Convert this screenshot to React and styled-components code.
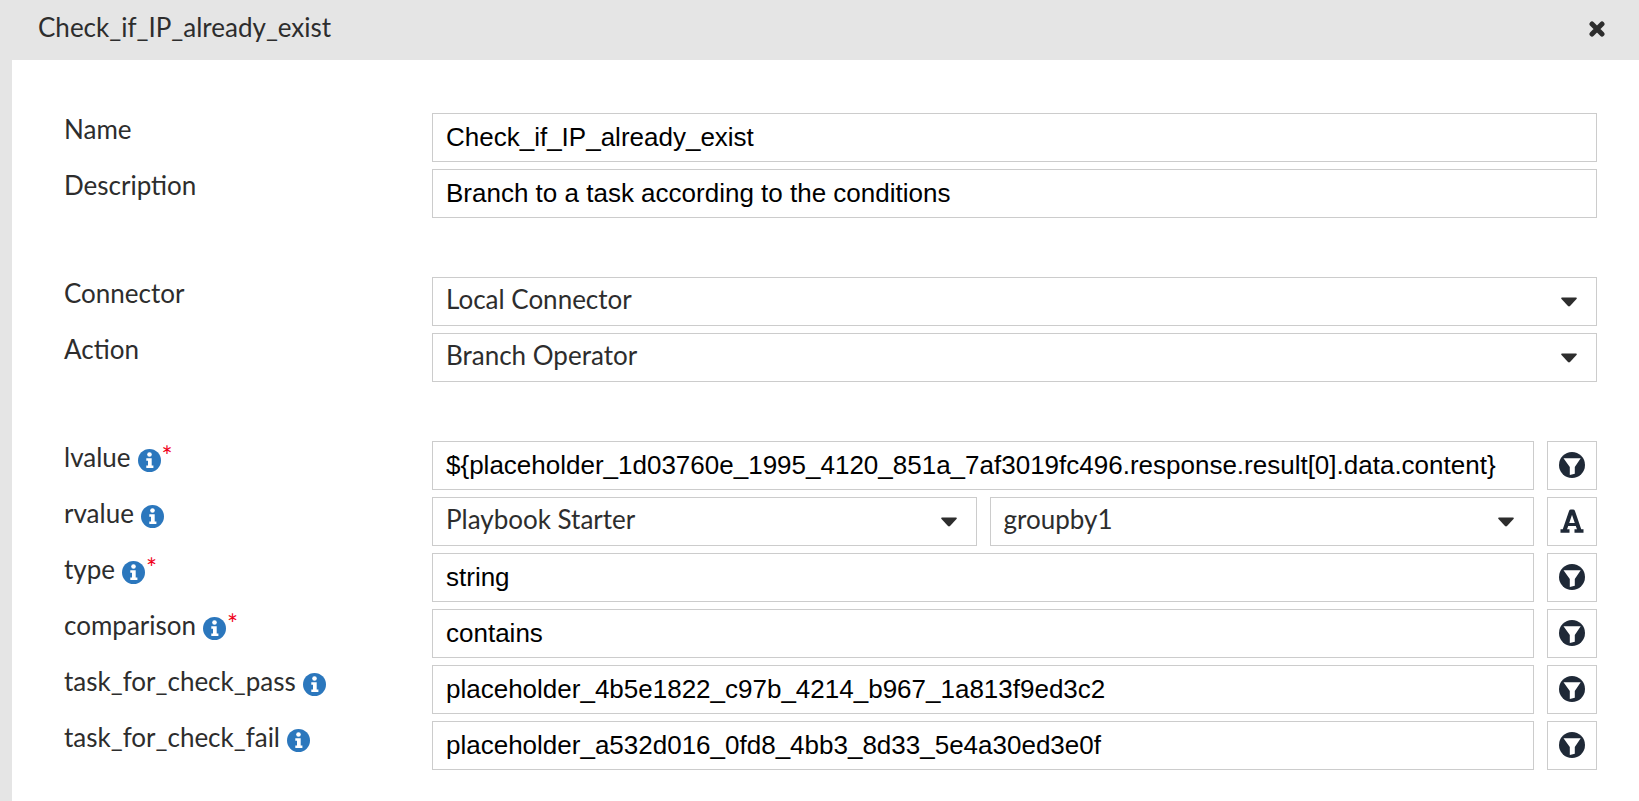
import React from 'react';
import styled, { createGlobalStyle } from 'styled-components';

const GlobalStyle = createGlobalStyle`
  *, *::before, *::after {
    box-sizing: border-box;
  }

  body {
    margin: 0;
    background-color: #fff;
    color: #2d2d2d;
    font-family: Lato, sans-serif;
    font-size: 26px;
  }
`;

const Dialog = styled.section`
  display: flex;
  flex-direction: column;
  min-height: 100vh;
`;

const Header = styled.header`
  display: flex;
  align-items: center;
  justify-content: space-between;
  height: 60px;
  padding: 0 32px 0 38px;
  background-color: #e5e5e5;
`;

const Title = styled.h1`
  margin: 0;
  padding-bottom: 6px;
  font-size: 26px;
  font-weight: 400;
  line-height: 32px;
`;

const CloseButton = styled.button`
  display: flex;
  padding: 2px 2px 4px;
  border: 0;
  background: none;
  color: #2d2d2d;
  cursor: pointer;
`;

const Form = styled.form`
  display: flex;
  flex: 1;
  flex-direction: column;
  gap: 59px;
  padding: 53px 42px 32px 52px;
  border-left: 12px solid #e5e5e5;
`;

const Group = styled.div`
  display: flex;
  flex-direction: column;
  gap: 7px;
`;

const Row = styled.div`
  display: grid;
  grid-template-columns: 368px minmax(0, 1fr);
`;

const LabelCell = styled.div`
  display: flex;
  align-items: flex-start;
  height: 49px;
`;

const Label = styled.label`
  line-height: 32px;
`;

const InfoSvg = styled.svg`
  width: 23px;
  height: 23px;
  margin: 8px 0 0 7px;
  color: #2b77bd;
`;

const Required = styled.span`
  margin-left: 1px;
  color: #f00018;
  font-size: 26px;
  line-height: 30px;
`;

const Controls = styled.div`
  display: flex;
  gap: 13px;
`;

const Input = styled.input`
  flex: 1;
  min-width: 0;
  height: 49px;
  padding: 0 13px;
  border: 1px solid #ccc;
  border-radius: 0;
  background-color: #fff;
  color: #000;
  font-family: 'Liberation Sans', Arial, sans-serif;
  font-size: 26px;
`;

const SelectWrap = styled.div`
  position: relative;
  flex: 1;
  min-width: 0;
`;

const StyledSelect = styled.select`
  width: 100%;
  height: 49px;
  padding: 0 48px 6px 13px;
  border: 1px solid #ccc;
  border-radius: 0;
  appearance: none;
  background-color: #fff;
  color: #2d2d2d;
  font-family: Lato, sans-serif;
  font-size: 26px;
`;

const Caret = styled.svg`
  position: absolute;
  top: 20px;
  right: 20px;
  width: 16px;
  height: 10px;
  fill: #2d2d2d;
  pointer-events: none;
`;

const IconButton = styled.button`
  display: flex;
  flex: none;
  align-items: center;
  justify-content: center;
  width: 50px;
  height: 49px;
  padding: 0 0 1px;
  border: 1px solid #ccc;
  background-color: #fff;
  color: #1f2937;
  cursor: pointer;
`;

const CloseIcon = () => (
  <svg width="16" height="16" viewBox="0 0 16 16" aria-hidden="true">
    <path
      d="M3 3l10 10M13 3L3 13"
      fill="none"
      stroke="currentColor"
      strokeWidth="5"
      strokeLinecap="round"
    />
  </svg>
);

const InfoIcon = () => (
  <InfoSvg viewBox="0 0 23 23" aria-hidden="true">
    <circle cx="11.5" cy="11.5" r="11.5" fill="currentColor" />
    <circle cx="11.5" cy="5.5" r="2.3" fill="#fff" />
    <path d="M8.300 9.200h5.400v7.300h1.700v2.500H8.300v-2.500H10v-4.800H8.300z" fill="#fff" />
  </InfoSvg>
);

const FilterIcon = () => (
  <svg width="26" height="26" viewBox="0 0 26 26" aria-hidden="true">
    <circle cx="13" cy="13" r="13" fill="currentColor" />
    <path d="M4.500 6.200h17.200l-5.900 8.800v6.800l-5 1.300V15z" fill="#fff" />
  </svg>
);

// slab style text icon, drawn with strokes
const TextIcon = () => (
  <svg width="24" height="24" viewBox="0 0 24 24" aria-hidden="true">
    <g fill="none" stroke="currentColor" strokeLinejoin="round">
      <path d="M4.500 21.500L11 2.500h2l6.500 19" strokeWidth="4" />
      <path d="M7 15.500h10" strokeWidth="3" />
      <path d="M.5 22h9M14.500 22h9" strokeWidth="3.500" />
    </g>
  </svg>
);

const Select = ({ value, ...props }) => (
  <SelectWrap>
    <StyledSelect defaultValue={value} {...props}>
      <option value={value}>{value}</option>
    </StyledSelect>
    <Caret viewBox="0 0 16 10" aria-hidden="true">
      <path d="M1 .5h14q1.400 .5 .5 1.500L9 9q-1 .8-2 0L.5 2Q-.4 1 1 .5z" />
    </Caret>
  </SelectWrap>
);

const Field = ({ id, label, info, required, children }) => (
  <Row>
    <LabelCell>
      <Label htmlFor={id}>{label}</Label>
      {info && <InfoIcon />}
      {required && <Required>*</Required>}
    </LabelCell>
    <Controls>{children}</Controls>
  </Row>
);

const ParamField = ({ name, value, required }) => (
  <Field id={name} label={name} info required={required}>
    <Input id={name} type="text" defaultValue={value} required={required} />
    <IconButton type="button" aria-label={`Select source for ${name}`}>
      <FilterIcon />
    </IconButton>
  </Field>
);

const params = [
  { name: 'type', value: 'string', required: true },
  { name: 'comparison', value: 'contains', required: true },
  { name: 'task_for_check_pass', value: 'placeholder_4b5e1822_c97b_4214_b967_1a813f9ed3c2' },
  { name: 'task_for_check_fail', value: 'placeholder_a532d016_0fd8_4bb3_8d33_5e4a30ed3e0f' },
];

const App = () => {
  return (
    <>
      <GlobalStyle />
      <Dialog>
        <Header>
          <Title>Check_if_IP_already_exist</Title>
          <CloseButton type="button" aria-label="Close">
            <CloseIcon />
          </CloseButton>
        </Header>
        <Form>
          <Group>
            <Field id="name" label="Name">
              <Input id="name" type="text" defaultValue="Check_if_IP_already_exist" />
            </Field>
            <Field id="description" label="Description">
              <Input
                id="description"
                type="text"
                defaultValue="Branch to a task according to the conditions"
              />
            </Field>
          </Group>
          <Group>
            <Field id="connector" label="Connector">
              <Select id="connector" value="Local Connector" />
            </Field>
            <Field id="action" label="Action">
              <Select id="action" value="Branch Operator" />
            </Field>
          </Group>
          <Group>
            <ParamField
              name="lvalue"
              value="${placeholder_1d03760e_1995_4120_851a_7af3019fc496.response.result[0].data.content}"
              required
            />
            <Field id="rvalue" label="rvalue" info>
              <Select id="rvalue" value="Playbook Starter" />
              <Select value="groupby1" aria-label="rvalue field" />
              <IconButton type="button" aria-label="Enter text for rvalue">
                <TextIcon />
              </IconButton>
            </Field>
            {params.map((param) => (
              <ParamField key={param.name} {...param} />
            ))}
          </Group>
        </Form>
      </Dialog>
    </>
  );
};

export default App;
